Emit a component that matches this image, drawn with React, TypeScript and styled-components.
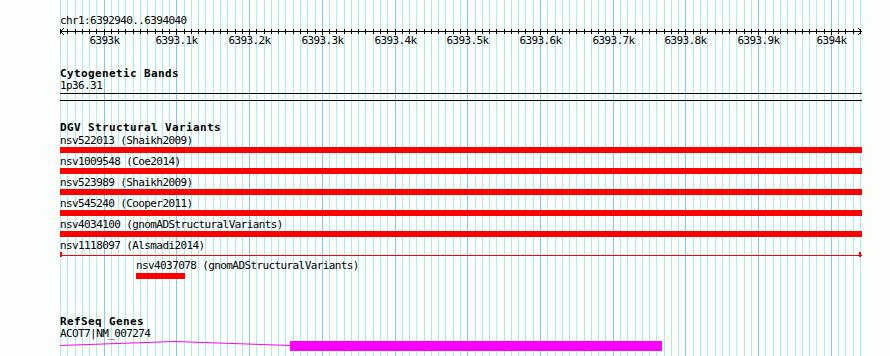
import React from "react";
import styled, { createGlobalStyle } from "styled-components";

const START = 6392940;
const END = 6394040;
const X0 = 60;
const WIDTH = 800;
const PX = WIDTH / (END - START);
const bpX = (bp: number) => X0 + (bp - START) * PX;

const BG = "#fcfefc";
const MINOR = "#aeeaee";
const MAJOR = "#86c8ec";
const MONO = `"DejaVu Sans Mono", "Liberation Mono", monospace`;

const GlobalStyle = createGlobalStyle`
  html, body { margin: 0; padding: 0; background: ${BG}; }
  #root { width: 890px; height: 356px; overflow: hidden; }
`;

const Panel = styled.div`
  position: relative;
  width: 890px;
  height: 356px;
  background: ${BG};
  overflow: hidden;
  font-family: ${MONO};
  color: #000;
`;

const GridLayer = styled.svg`
  position: absolute;
  left: 0;
  top: 0;
  z-index: 0;
`;

const Tracks = styled.div`
  position: relative;
  z-index: 1;
  display: flex;
  flex-direction: column;
  padding-top: 15px;
`;

const PlainText = styled.div<{ $mt?: number }>`
  font-size: 11px;
  letter-spacing: -0.6px;
  line-height: 12px;
  height: 12px;
  white-space: pre;
  padding-left: ${X0}px;
  margin-top: ${(p) => p.$mt ?? 0}px;
`;

const TrackTitle = styled.div<{ $mt: number }>`
  font-size: 11px;
  font-weight: bold;
  letter-spacing: 0.38px;
  line-height: 12px;
  height: 12px;
  white-space: pre;
  padding-left: ${X0}px;
  margin-top: ${(p) => p.$mt}px;
`;

const RulerSvg = styled.svg`
  display: block;
  width: 890px;
  height: 22px;
  overflow: visible;
`;

const Ideogram = styled.div`
  margin-top: 1px;
  margin-left: ${X0}px;
  width: 802px;
  height: 6px;
  border-top: 1px solid #000;
  border-bottom: 1px solid #000;
`;

const FeatureRow = styled.div<{ $mt: number }>`
  display: flex;
  flex-direction: column;
  margin-top: ${(p) => p.$mt}px;
`;

const FeatureLabel = styled.div`
  font-size: 11px;
  letter-spacing: -0.6px;
  line-height: 12px;
  height: 12px;
  white-space: pre;
`;

const FeatureBar = styled.div<{ $gap?: number }>`
  height: 6px;
  margin-top: ${(p) => p.$gap ?? 0}px;
  background: #ff0000;
`;

const ThinFeature = styled.div`
  position: relative;
  height: 6px;
  display: flex;
  align-items: center;
  &::before {
    content: "";
    flex: 1;
    height: 1px;
    background: #ff0000;
  }
`;

const Cap = styled.span<{ $side: "left" | "right" }>`
  position: absolute;
  top: 0;
  ${(p) => (p.$side === "left" ? "left: 0;" : "right: 1px;")}
  width: 2px;
  height: 5px;
  background: #ff0000;
`;

const GeneSvg = styled.svg`
  display: block;
  width: 890px;
  height: 12px;
`;

type Variant = { id: string; source: string; start: number; end: number; thin?: boolean };

const variants: Variant[] = [
  { id: "nsv522013", source: "Shaikh2009", start: START, end: END + 3 },
  { id: "nsv1009548", source: "Coe2014", start: START, end: END + 3 },
  { id: "nsv523989", source: "Shaikh2009", start: START, end: END + 3 },
  { id: "nsv545240", source: "Cooper2011", start: START, end: END + 3 },
  { id: "nsv4034100", source: "gnomADStructuralVariants", start: START, end: END + 3 },
  { id: "nsv1118097", source: "Alsmadi2014", start: START, end: END + 3, thin: true },
];

const smallVariant: Variant = {
  id: "nsv4037078",
  source: "gnomADStructuralVariants",
  start: START + 104.5,
  end: START + 172,
};

function Grid() {
  const lines = [];
  for (let k = 0; k <= 110; k++) {
    const x = Math.round(X0 + k * (WIDTH / 110));
    const major = (START + k * 10) % 100 === 0;
    lines.push(<rect key={k} x={x} y={0} width={1} height={356} fill={major ? MAJOR : MINOR} />);
  }
  return (
    <GridLayer width={890} height={356} shapeRendering="crispEdges">
      {lines}
    </GridLayer>
  );
}

function Ruler() {
  const ticks = [];
  const labels = [];
  for (let k = 0; k <= 110; k++) {
    const bp = START + k * 10;
    const x = Math.round(X0 + k * (WIDTH / 110)) + 0.5;
    const major = bp % 100 === 0;
    ticks.push(<line key={k} x1={x} x2={x} y1={2} y2={major ? 8 : 7} stroke="#000" strokeWidth={1} />);
    if (major) {
      const kb = (bp / 1000).toString();
      labels.push(
        <text
          key={"l" + k}
          x={x}
          y={17}
          textAnchor="middle"
          fontFamily={MONO}
          fontSize={11}
          letterSpacing={-0.6}
          fill="#000"
        >
          {kb}k
        </text>
      );
    }
  }
  return (
    <RulerSvg viewBox="0 0 890 22">
      <g shapeRendering="crispEdges">
        <line x1={60} x2={862} y1={4.5} y2={4.5} stroke="#000" strokeWidth={1} />
        {ticks}
      </g>
      <polyline points="64,1 60.5,4.5 64,8" fill="none" stroke="#000" strokeWidth={1} />
      <polyline points="858,1 861.5,4.5 858,8" fill="none" stroke="#000" strokeWidth={1} />
      {labels}
    </RulerSvg>
  );
}

function VariantRow({ v, mt }: { v: Variant; mt: number }) {
  const left = bpX(v.start);
  const width = bpX(v.end) - left;
  return (
    <FeatureRow $mt={mt} style={{ marginLeft: Math.round(left), width: Math.round(width) }}>
      <FeatureLabel>{`${v.id} (${v.source})`}</FeatureLabel>
      {v.thin ? (
        <ThinFeature>
          <Cap $side="left" />
          <Cap $side="right" />
        </ThinFeature>
      ) : (
        <FeatureBar />
      )}
    </FeatureRow>
  );
}

function Gene() {
  return (
    <GeneSvg viewBox="0 0 890 12">
      <polyline
        points="60,5.5 175,1.5 290,5.5"
        fill="none"
        stroke="#ff00ff"
        strokeWidth={1}
      />
      <rect x={290} y={1} width={372} height={10} fill="#ff00ff" shapeRendering="crispEdges" />
    </GeneSvg>
  );
}

export default function App() {
  const smallLeft = Math.round(bpX(smallVariant.start));
  const smallWidth = Math.round(bpX(smallVariant.end) - bpX(smallVariant.start));
  return (
    <>
      <GlobalStyle />
      <Panel>
        <Grid />
        <Tracks>
          <PlainText>chr1:6392940..6394040</PlainText>
          <Ruler />
          <TrackTitle $mt={19}>Cytogenetic Bands</TrackTitle>
          <PlainText>1p36.31</PlainText>
          <Ideogram />
          <TrackTitle $mt={21}>DGV Structural Variants</TrackTitle>
          {variants.map((v, i) => (
            <VariantRow key={v.id} v={v} mt={i === 0 ? 1 : 3} />
          ))}
          <FeatureRow $mt={2} style={{ marginLeft: smallLeft, width: 300 }}>
            <FeatureLabel>{`${smallVariant.id} (${smallVariant.source})`}</FeatureLabel>
            <FeatureBar $gap={1} style={{ width: smallWidth }} />
          </FeatureRow>
          <TrackTitle $mt={37}>RefSeq Genes</TrackTitle>
          <PlainText>ACOT7|NM_007274</PlainText>
          <Gene />
        </Tracks>
      </Panel>
    </>
  );
}
